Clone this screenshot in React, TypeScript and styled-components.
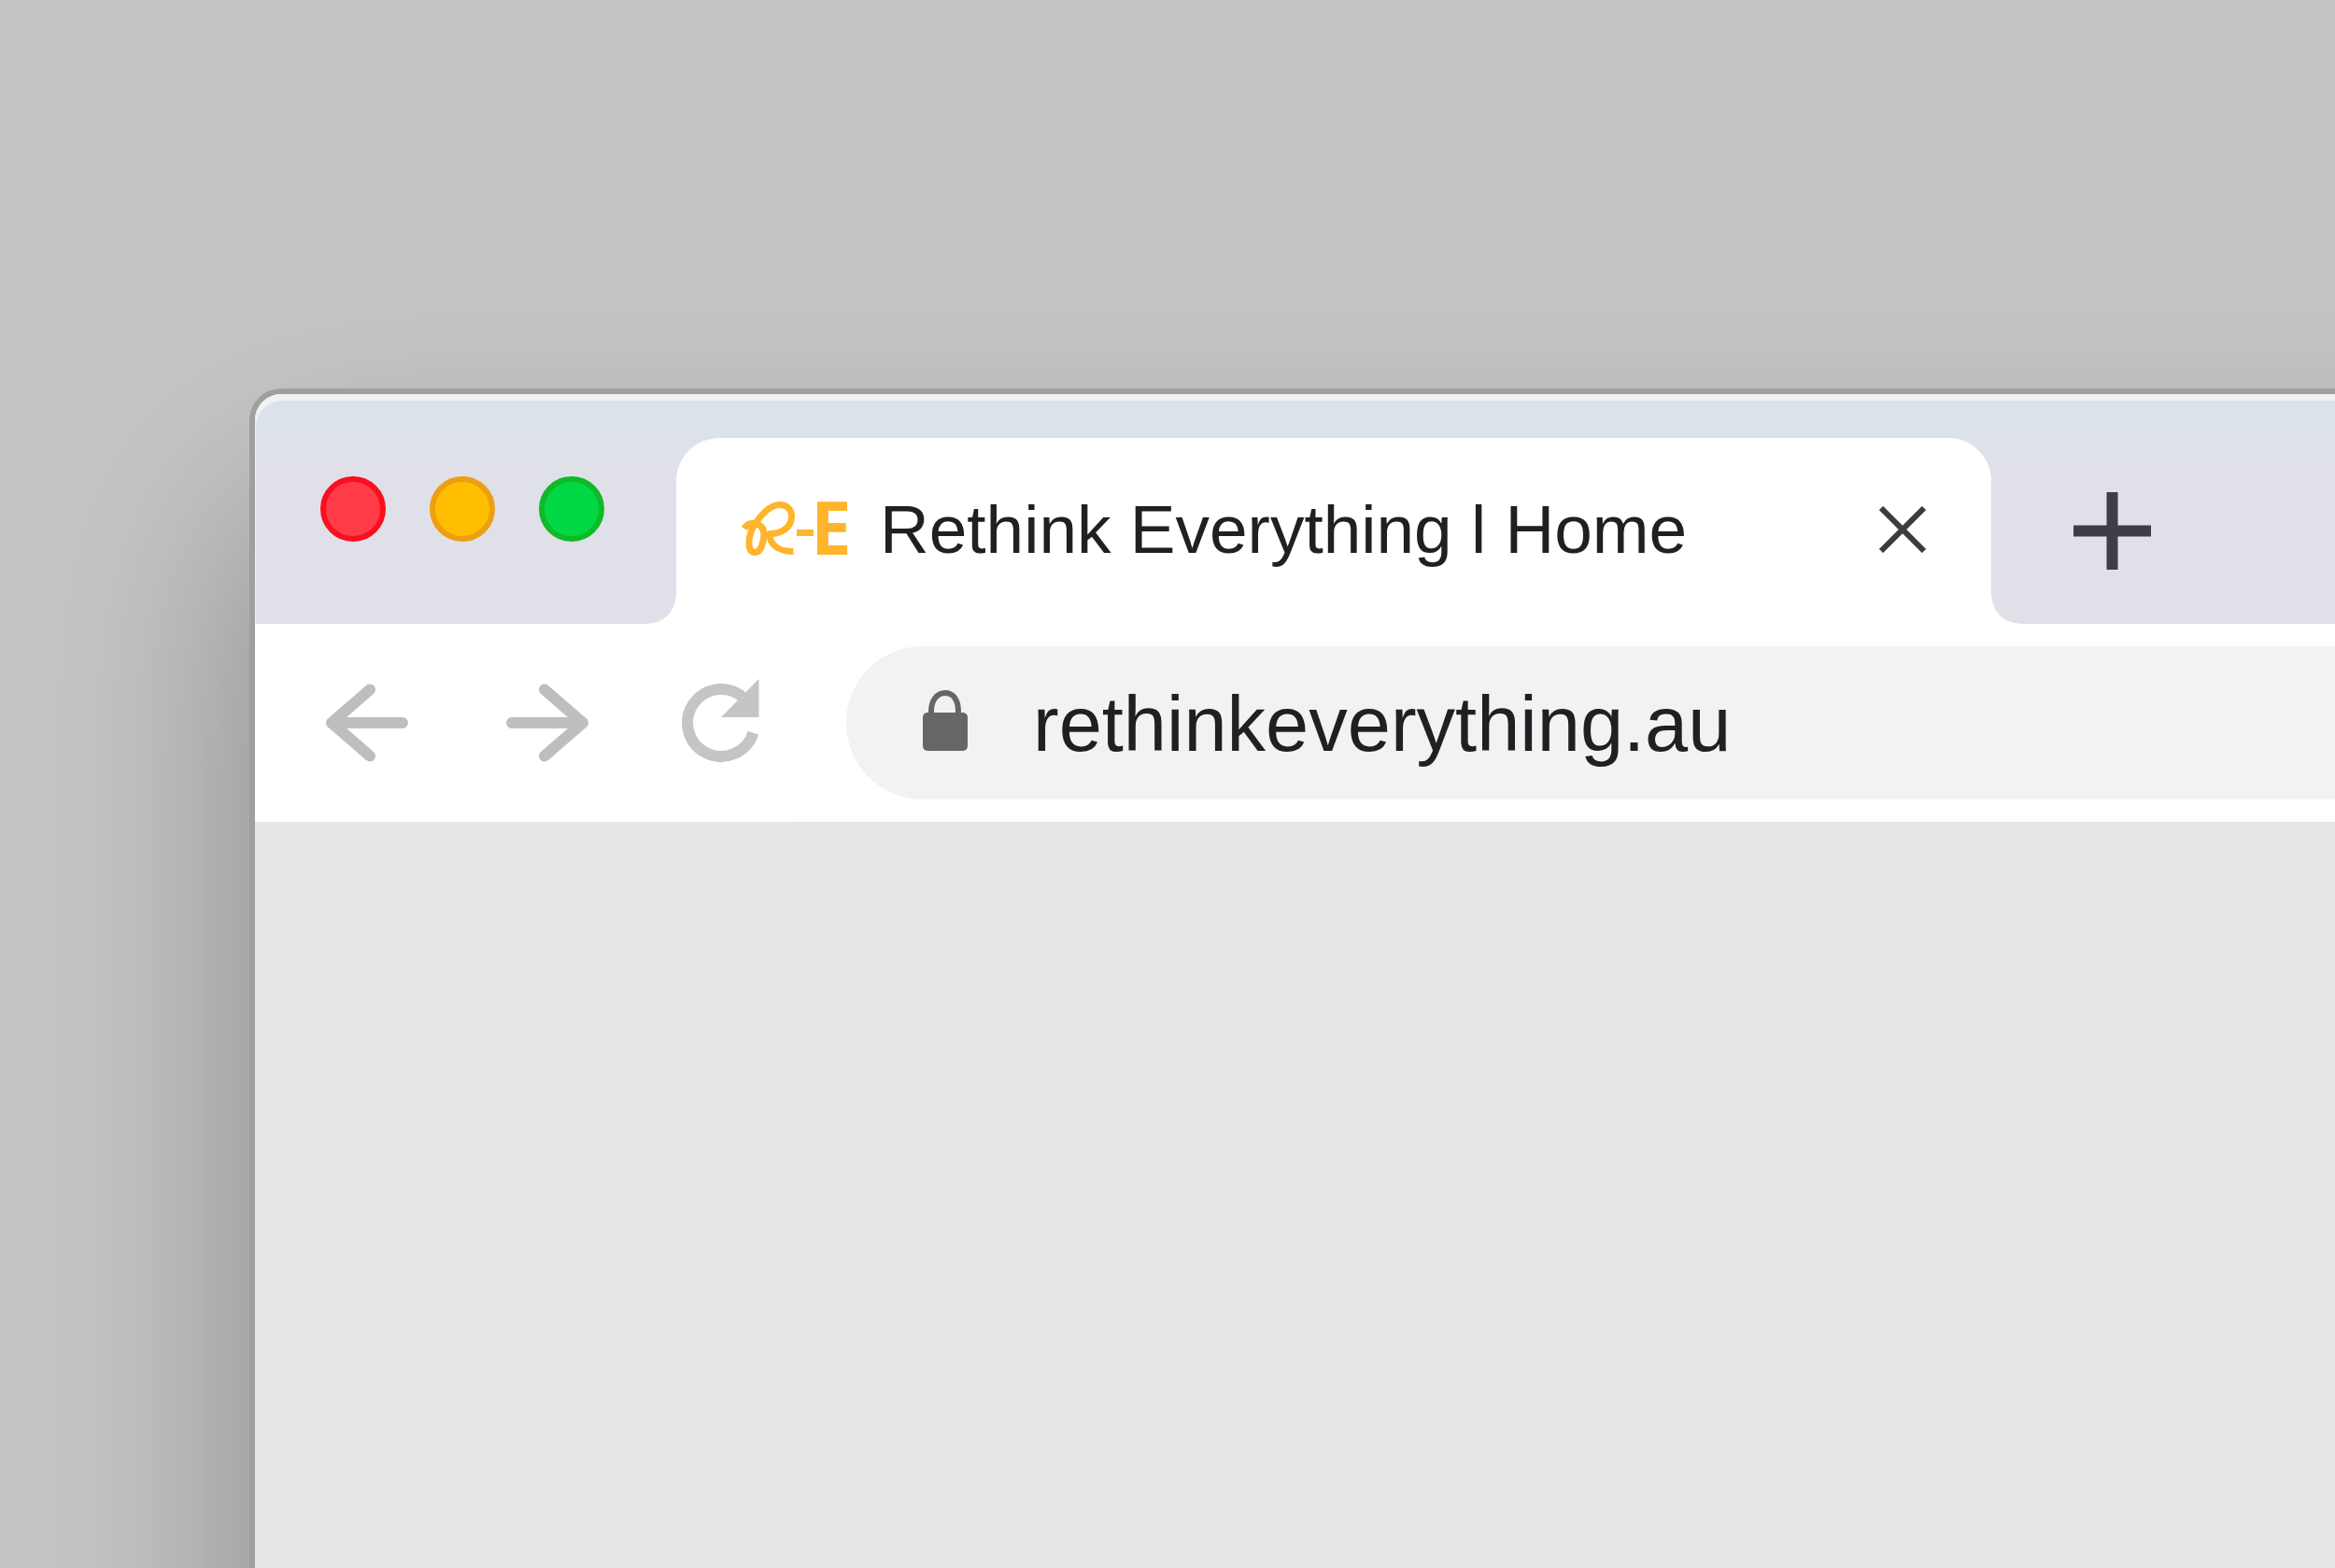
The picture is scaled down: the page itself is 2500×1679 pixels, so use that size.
import React from "react";
import styled, { createGlobalStyle } from "styled-components";

const GlobalStyle = createGlobalStyle`
  *, *::before, *::after { box-sizing: border-box; }
  body { margin: 0; background: #c5c5c5; }
  button, input { font: inherit; color: inherit; border: 0; padding: 0; margin: 0; background: none; }
`;

const Desktop = styled.div`
  display: flex;
  min-height: 100vh;
  overflow: hidden;
  padding: 422px 0 0 273px;
  background: #c5c5c5;
  color: #202023;
  font-family: "Liberation Sans", Arial, sans-serif;
`;

const BrowserWindow = styled.main`
  display: flex;
  flex: 1 0 auto;
  flex-direction: column;
  margin: 0 -400px -500px 0;
  border-radius: 28px 0 0 0;
  background: #ffffff;
  box-shadow:
    0 0 0 6px #9f9f9f,
    0 124px 240px rgba(0, 0, 0, 0.31);
`;

const TabStrip = styled.header`
  display: flex;
  align-items: flex-start;
  padding: 47px 0 0 70px;
  border-radius: 28px 0 0 0;
  background: linear-gradient(#dce2ea, #dce2ea 40px, #e0e0e9 80px, #e0e0e9);
  box-shadow: inset 1px 7px 1px #f2f2f3;
`;

const WindowControls = styled.div`
  display: flex;
  gap: 47px;
  padding: 41px 77px 0 0;
`;

const Light = styled.button<{ $fill: string; $ring: string }>`
  width: 70px;
  height: 70px;
  border: 6px solid ${(p) => p.$ring};
  border-radius: 50%;
  background: ${(p) => p.$fill};
`;

const Tab = styled.div`
  position: relative;
  display: flex;
  flex: 0 1 1408px;
  align-items: center;
  gap: 28px;
  height: 199px;
  padding: 0 70px 4px;
  border-radius: 46px 46px 0 0;
  background: #ffffff;

  &::before,
  &::after {
    content: "";
    position: absolute;
    bottom: 0;
    width: 30px;
    height: 30px;
  }
  &::before {
    right: 100%;
    background: radial-gradient(circle at 0 0, transparent 29px, #ffffff 30px);
  }
  &::after {
    left: 100%;
    background: radial-gradient(circle at 100% 0, transparent 29px, #ffffff 30px);
  }
`;

const LogoMark = styled.svg`
  flex: none;
  overflow: visible;
`;

const TabTitle = styled.span`
  flex: 1;
  font-size: 73px;
  line-height: 84px;
  white-space: nowrap;
`;

const IconButton = styled.button`
  display: flex;
  flex: none;
`;

const NewTabButton = styled(IconButton)`
  padding: 58px 88px;
`;

const Toolbar = styled.nav`
  display: flex;
  align-items: center;
  gap: 93px;
  padding: 24px 0 24px 76px;
  background: #ffffff;
`;

const History = styled.div`
  display: flex;
  align-items: center;
  gap: 100px;
`;

const AddressBar = styled.label`
  display: flex;
  flex: 1;
  align-items: center;
  gap: 70px;
  height: 164px;
  padding-left: 82px;
  border-radius: 82px 0 0 82px;
  background: #f2f2f5;
`;

const AddressInput = styled.input`
  flex: 1;
  min-width: 0;
  height: 100px;
  padding-top: 4px;
  font-size: 83px;
  outline: none;
`;

const Viewport = styled.section`
  flex: 1;
  background: linear-gradient(90deg, #e6e6e9 575px, #e6e4e7 576px);
`;

const Logo = () => (
  <LogoMark width="120" height="120" viewBox="-1 -30 120 120" role="img" aria-label="R-E">
    <path
      d="M1.8 29C5 24 10 22.500 15 24C22 26 24 32 22.500 40C21 49 18 54.500 13 54.500C8 54.500 6.500 49 7 42C7.500 33 11 27 15.500 21C22 12 30 3.500 40 3.500C48 3.500 53 9 52.500 17C52 27 43 34.500 29.500 34.500C28 45 38 54 54.500 53.500"
      fill="none"
      stroke="#ffb52b"
      strokeWidth="7"
      strokeLinejoin="round"
    />
    <path d="M58 33.500H76" stroke="#ffb52b" strokeWidth="7" />
    <text x="73" y="57" fill="#ffb52b" fontFamily="'Open Sans', 'Noto Sans', sans-serif" fontSize="78" fontWeight="700">
      E
    </text>
  </LogoMark>
);

const CloseIcon = () => (
  <svg width="50" height="50" viewBox="0 0 50 50" stroke="#3c3c3e" strokeWidth="6">
    <path d="M2 2L48 48M48 2L2 48" />
  </svg>
);

const PlusIcon = () => (
  <svg width="83" height="83" viewBox="0 0 83 83" stroke="#3e3e48" strokeWidth="12">
    <path d="M41.500 0V83M0 41.500H83" />
  </svg>
);

const BackIcon = () => (
  <svg width="93" height="84" viewBox="0 0 93 84" fill="none" stroke="#bebec0" strokeWidth="12" strokeLinecap="round" strokeLinejoin="round">
    <path d="M47 6.500L6 42L47 77.500M6 42H82" />
  </svg>
);

const ForwardIcon = () => (
  <svg width="88" height="84" viewBox="0 0 88 84" fill="none" stroke="#bebec0" strokeWidth="12" strokeLinecap="round" strokeLinejoin="round">
    <path d="M41 6.500L82 42L41 77.500M82 42H6" />
  </svg>
);

const ReloadIcon = () => (
  <svg width="83" height="94" viewBox="0 0 83 94">
    <path d="M67.500 21.500A36 36 0 1 0 76.400 57.700" fill="none" stroke="#c5c5c7" strokeWidth="12" />
    <path d="M82.500 0V41H42Z" fill="#c5c5c7" />
  </svg>
);

const LockIcon = () => (
  <svg width="48" height="70" viewBox="0 0 48 70">
    <path d="M9 28V23C9 11 15 3 24 3S38 11 38 23V28" fill="none" stroke="#666668" strokeWidth="6" />
    <rect y="24" width="48" height="41" rx="5" fill="#666668" />
  </svg>
);

export default function App() {
  return (
    <>
      <GlobalStyle />
      <Desktop>
        <BrowserWindow>
          <TabStrip>
            <WindowControls>
              <Light aria-label="Close window" $fill="#ff3b47" $ring="#f90f20" />
              <Light aria-label="Minimize window" $fill="#ffbf00" $ring="#ec9f10" />
              <Light aria-label="Zoom window" $fill="#00d944" $ring="#10b928" />
            </WindowControls>
            <Tab>
              <Logo />
              <TabTitle>Rethink Everything l Home</TabTitle>
              <IconButton aria-label="Close tab">
                <CloseIcon />
              </IconButton>
            </Tab>
            <NewTabButton aria-label="New tab">
              <PlusIcon />
            </NewTabButton>
          </TabStrip>
          <Toolbar>
            <History>
              <IconButton aria-label="Back">
                <BackIcon />
              </IconButton>
              <IconButton aria-label="Forward">
                <ForwardIcon />
              </IconButton>
              <IconButton aria-label="Reload">
                <ReloadIcon />
              </IconButton>
            </History>
            <AddressBar>
              <LockIcon />
              <AddressInput type="text" aria-label="Address" defaultValue="rethinkeverything.au" spellCheck={false} />
            </AddressBar>
          </Toolbar>
          <Viewport />
        </BrowserWindow>
      </Desktop>
    </>
  );
}
